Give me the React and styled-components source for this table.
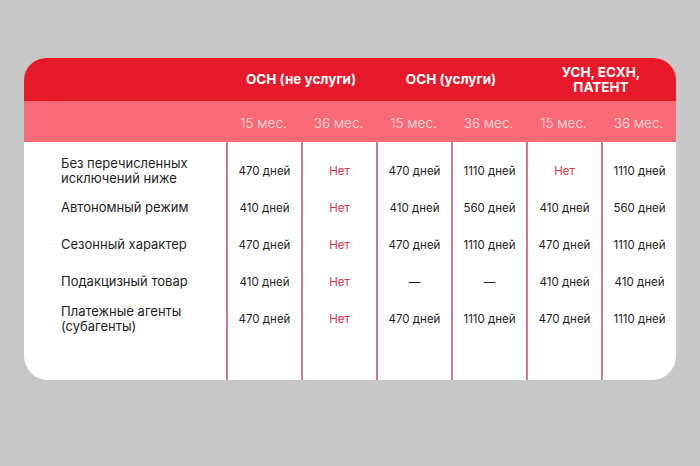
import styled, { createGlobalStyle } from "styled-components"

const GlobalStyle = createGlobalStyle`
  html, body {
    margin: 0;
    padding: 0;
    background: #c7c7c7;
  }
  body {
    font-family: Inter, "Noto Sans", sans-serif;
  }
`

const Page = styled.div`
  width: 700px;
  height: 466px;
  padding: 58px 24px 0;
  box-sizing: border-box;
`

const Card = styled.div`
  width: 652px;
  height: 322px;
  background: #fff;
  border-radius: 22px 22px 24px 24px;
  overflow: hidden;
  display: flex;
  flex-direction: column;
`

const HeadRow = styled.div`
  display: grid;
  grid-template-columns: 202px repeat(6, 1fr);
  height: ${p => p.$h}px;
  background: ${p => p.$bg};
  flex-shrink: 0;
`

const Group = styled.div`
  grid-column: span 2;
  display: flex;
  flex-direction: column;
  align-items: center;
  justify-content: center;
  text-align: center;
  color: #fff;
  font-weight: 700;
  font-size: 13.5px;
  line-height: 15px;
`

const Period = styled.div`
  display: flex;
  align-items: center;
  justify-content: center;
  color: #fde0e2;
  font-size: 13.5px;
  font-weight: 300;
  padding-top: 2px;
`

const Body = styled.div`
  flex: 1;
  display: grid;
  grid-template-columns: 202px repeat(6, 1fr);
`

const Column = styled.div`
  display: flex;
  flex-direction: column;
  padding-top: 10px;
  border-left: ${p => (p.$first ? "none" : "2px solid #cf7b88")};
`

const LabelCell = styled.div`
  height: 37px;
  display: flex;
  align-items: center;
  padding-left: 37px;
  font-size: 13px;
  line-height: 15px;
  color: #1e1e1e;
`

const ValueCell = styled.div`
  height: 37px;
  display: flex;
  align-items: center;
  justify-content: center;
  font-size: 11.5px;
  color: ${p => (p.$no ? "#e2303e" : "#1e1e1e")};
`

const groups = [["ОСН (не услуги)"], ["ОСН (услуги)"], ["УСН, ЕСХН,", "ПАТЕНТ"]]
const periods = ["15 мес.", "36 мес.", "15 мес.", "36 мес.", "15 мес.", "36 мес."]

const rows = [
  { label: "Без перечисленных исключений ниже", values: ["470 дней", "Нет", "470 дней", "1110 дней", "Нет", "1110 дней"] },
  { label: "Автономный режим", values: ["410 дней", "Нет", "410 дней", "560 дней", "410 дней", "560 дней"] },
  { label: "Сезонный характер", values: ["470 дней", "Нет", "470 дней", "1110 дней", "470 дней", "1110 дней"] },
  { label: "Подакцизный товар", values: ["410 дней", "Нет", "—", "—", "410 дней", "410 дней"] },
  { label: "Платежные агенты (субагенты)", values: ["470 дней", "Нет", "470 дней", "1110 дней", "470 дней", "1110 дней"] },
]

const App = () => {
  return (
    <Page>
      <GlobalStyle />
      <Card>
        <HeadRow $h={43} $bg="#e8192b">
          <div />
          {groups.map((g, i) => (
            <Group key={i}>
              {g.map(line => <span key={line}>{line}</span>)}
            </Group>
          ))}
        </HeadRow>
        <HeadRow $h={41} $bg="#f86b76">
          <div />
          {periods.map((p, i) => (
            <Period key={i}>{p}</Period>
          ))}
        </HeadRow>
        <Body>
          <Column $first>
            {rows.map((r, i) => (
              <LabelCell key={i}>{r.label}</LabelCell>
            ))}
          </Column>
          {periods.map((_, c) => (
            <Column key={c}>
              {rows.map((r, i) => (
                <ValueCell key={i} $no={r.values[c] === "Нет"}>{r.values[c]}</ValueCell>
              ))}
            </Column>
          ))}
        </Body>
      </Card>
    </Page>
  )
}

export default App
